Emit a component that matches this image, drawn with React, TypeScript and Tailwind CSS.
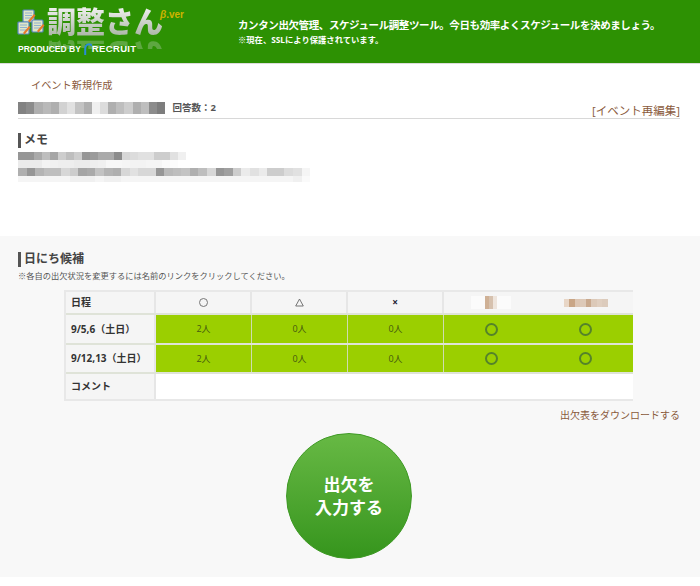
const jp = { fontFamily: '"Open Sans", "Noto Sans CJK JP", sans-serif' };

function Mosaic({ cells, h, size = 8 }: { cells: number[]; h: number; size?: number }) {
  return (
    <div className="flex">
      {cells.map((c, i) => (
        <div key={i} style={{ width: size, height: h, background: `rgb(${c},${c},${c})` }} />
      ))}
    </div>
  );
}

function SheetIcon({ x, y }: { x: number; y: number }) {
  return (
    <g transform={`translate(${x} ${y})`}>
      <rect x="0" y="0" width="11" height="12" rx="1" fill="#dfe6c8" stroke="#5a86c0" strokeWidth="1.2" />
      <path d="M2 3h7M2 5.5h7M2 8h7" stroke="#8fb0d0" strokeWidth="1" />
      <path d="M5 11l6-7 1.5 1.5-6 7z" fill="#e8792a" />
    </g>
  );
}

function Logo() {
  return (
    <div className="relative w-[190px] h-[63px] shrink-0">
      <svg className="absolute left-[17px] top-[9px]" width="28" height="27" viewBox="0 0 28 27">
        <SheetIcon x={6} y={1} />
        <SheetIcon x={1} y={13} />
        <SheetIcon x={15} y={11} />
      </svg>
      <div
        className="absolute left-[47px] top-[5px] h-[34px] text-[29px] leading-[34px] font-black whitespace-nowrap bg-gradient-to-b from-[#f6f6f6] to-[#a4b09f] bg-clip-text text-transparent"
        style={jp}
      >
        調整さん
      </div>
      <div className="absolute left-[47px] top-[37px] h-[12px] overflow-hidden">
        <div
          className="h-[34px] text-[29px] leading-[34px] font-black whitespace-nowrap text-[#8fbd80] opacity-50 blur-[0.6px] scale-y-[-1]"
          style={jp}
        >
          調整さん
        </div>
      </div>
      <div className="absolute left-[160px] top-[9px] text-[10px] leading-[12px] font-bold text-[#cdb400] whitespace-nowrap" style={{ fontFamily: '"Liberation Sans", sans-serif' }}>
        <span className="italic">β</span>.ver
      </div>
      <div className="absolute left-[18px] top-[43px] flex items-center h-[12px] text-white font-bold whitespace-nowrap" style={{ fontFamily: '"Liberation Sans", sans-serif' }}>
        <span className="text-[8.5px]">PRODUCED BY</span>
        <svg className="ml-[3px]" width="8" height="12" viewBox="0 0 8 12">
          <path d="M1.2 12V6C1.2 3 3 1.2 5 1.2S7.4 2 8 3" fill="none" stroke="#2a8bd8" strokeWidth="2" />
        </svg>
        <span className="text-[9.5px] tracking-[0.35px]">RECRUIT</span>
      </div>
    </div>
  );
}

const greyRow = [150, 150, 170, 190, 165, 205, 190, 205, 150, 155, 170, 170, 140, 215, 220, 225, 225, 205, 205, 225, 240];
const row1b = [235, 235, 235, 243, 240, 238, 238, 235, 235, 238, 240, 247, 247, 245, 243, 243, 245, 245, 250, 252, 255];
const row2a = [175, 150, 180, 190, 190, 215, 205, 165, 170, 195, 180, 175, 215, 225, 215, 215, 150, 185, 190, 195, 175, 190, 215, 150, 160, 205, 235, 225, 235, 205, 205, 220, 225, 245];
const row2b = [245, 245, 245, 245, 245, 245, 240, 240, 240, 245, 240, 240, 245, 245, 245, 245, 245, 245, 245, 245, 245, 245, 245, 245, 245, 245, 245, 245, 245, 245, 245, 245, 240, 250];
const titleRow = [130, 140, 175, 185, 175, 210, 225, 195, 175, 240, 220, 175, 190, 205, 175, 190, 140, 125];

function Heading({ children }: { children: string }) {
  return (
    <div className="flex items-center h-[18px]">
      <div className="w-[3px] h-[15px] bg-[#555555] mr-[3px]" />
      <span className="text-[12px] font-bold text-[#444444] leading-[18px]" style={jp}>{children}</span>
    </div>
  );
}

const headCell = "border-r-2 border-[#e6e6e6] flex items-center justify-center";

function Mark({ w }: { w: string }) {
  return (
    <div className={`${w} shrink-0 bg-[#9bcf00] flex items-center justify-center`}>
      <div className="w-[13px] h-[13px] rounded-full border-2 border-[#55832a]" />
    </div>
  );
}

function DataRow({ label, h }: { label: string; h: string }) {
  return (
    <div className={`flex ${h} border-b-2 border-[#dfe3d8]`}>
      <div className="w-[90px] shrink-0 bg-[#f5f5f5] border-r-2 border-[#e6e6e6] pl-[5px] flex items-center text-[10px] font-bold text-[#333333] whitespace-nowrap">{label}</div>
      {["2人", "0人", "0人"].map((t, i) => (
        <div key={i} className="w-[96px] shrink-0 bg-[#9bcf00] border-r border-[#cfdcb0] flex items-center justify-center text-[9px] text-[#465a10]">{t}</div>
      ))}
      <Mark w="w-[94px]" />
      <Mark w="w-[95px]" />
    </div>
  );
}

export default function App() {
  return (
    <div className="w-[700px] h-[586px] bg-white overflow-hidden" style={jp}>
      <header className="h-[64px] bg-[#2d9103] border-b border-[#dcdcdc] flex">
        <Logo />
        <div className="ml-[48px] pt-[17px] text-white font-bold whitespace-nowrap">
          <div className="text-[10.5px] leading-[16px] tracking-[-0.4px]">カンタン出欠管理、スケジュール調整ツール。今日も効率よくスケジュールを決めましょう。</div>
          <div className="text-[8.3px] leading-[14px]">※現在、SSLにより保護されています。</div>
        </div>
      </header>

      <div className="h-[172px] px-[18px]">
        <div className="pl-[13px] pt-[14px] text-[10.2px] leading-[14px] text-[#8a5a3c]">イベント新規作成</div>
        <div className="relative mt-[7px] h-[20px] border-b border-[#d8d8d8] w-[662px] flex">
          <div className="pt-[3px] blur-[0.5px]"><Mosaic cells={titleRow} h={12} size={8.2} /></div>
          <div className="ml-[7px] pt-[2px] text-[9.5px] leading-[14px] font-bold text-[#555555]">回答数：2</div>
          <div className="absolute right-0 top-[4px] text-[11.5px] leading-[16px] text-[#8a5a3c]">[イベント再編集]</div>
        </div>
        <div className="mt-[12px]"><Heading>メモ</Heading></div>
        <div className="mt-[3px] blur-[0.5px]">
          <Mosaic cells={greyRow} h={8} />
          <Mosaic cells={row1b} h={8} />
          <Mosaic cells={row2a} h={8} size={8.6} />
          <Mosaic cells={row2b} h={6} size={8.6} />
        </div>
      </div>

      <section className="h-[341px] bg-[#f8f8f8] relative pt-[14px] pl-[18px]">
        <Heading>日にち候補</Heading>
        <div className="mt-[2px] text-[8.25px] leading-[12px] text-[#555555]">※各自の出欠状況を変更するには名前のリンクをクリックしてください。</div>

        <div className="ml-[46px] mt-[8px] w-[569px] overflow-hidden border-t-2 border-l-2 border-b-2 border-[#e8e8e8] text-[#333333]">
          <div className="flex h-[23px] bg-[#f5f5f5] border-b-2 border-[#dfe3d8]">
            <div className={`w-[90px] shrink-0 pl-[5px] text-[10px] font-bold ${headCell} !justify-start`}>日程</div>
            <div className={`w-[96px] shrink-0 ${headCell}`}><div className="w-[9px] h-[9px] rounded-full border border-[#777777]" /></div>
            <div className={`w-[96px] shrink-0 ${headCell}`}>
              <svg width="9" height="9" viewBox="0 0 9 9"><path d="M4.5 1L8.3 8H.7z" fill="none" stroke="#666666" strokeWidth="0.9" /></svg>
            </div>
            <div className={`w-[96px] shrink-0 ${headCell} text-[10px] font-bold text-[#222233]`}>×</div>
            <div className="w-[94px] shrink-0 flex items-center justify-center">
              <div className="flex blur-[0.4px]">
                <div className="w-[14px] h-[13px] bg-[#fbfbfb]" />
                <div className="w-[4px] h-[13px] bg-[#cfb196]" />
                <div className="w-[4px] h-[13px] bg-[#d6c1ae]" />
                <div className="w-[4px] h-[13px] bg-[#eee5dd]" />
                <div className="w-[14px] h-[13px] bg-[#fbfbfb]" />
              </div>
            </div>
            <div className="w-[95px] shrink-0 flex items-center justify-center">
              <div className="flex blur-[0.4px]">
                {["#e8d6c6", "#c9a585", "#dcc5b2", "#ddc9b8", "#c9a98e", "#dcc9b8", "#e0cfc0", "#dccbbc"].map((c, i) => (
                  <div key={i} style={{ width: 5.5, height: 8, background: c }} />
                ))}
              </div>
            </div>
          </div>
          <DataRow label="9/5,6（土日）" h="h-[30px]" />
          <DataRow label="9/12,13（土日）" h="h-[29px]" />
          <div className="flex h-[25px]">
            <div className="w-[90px] shrink-0 bg-[#f5f5f5] border-r-2 border-[#e6e6e6] pl-[5px] flex items-center text-[10px] font-bold text-[#333333]">コメント</div>
            <div className="flex-1 bg-white" />
          </div>
        </div>

        <div className="absolute right-[20px] top-[172px] text-[10px] leading-[14px] text-[#8a5a3c]">出欠表をダウンロードする</div>

        <div className="absolute left-[286px] top-[197px] w-[126px] h-[126px] rounded-full bg-gradient-to-b from-[#67b944] to-[#35951c] border border-[#3f9a25] flex items-center justify-center text-center text-white font-bold text-[17px] leading-[23px]">
          <div>出欠を<br />入力する</div>
        </div>
      </section>
    </div>
  );
}
